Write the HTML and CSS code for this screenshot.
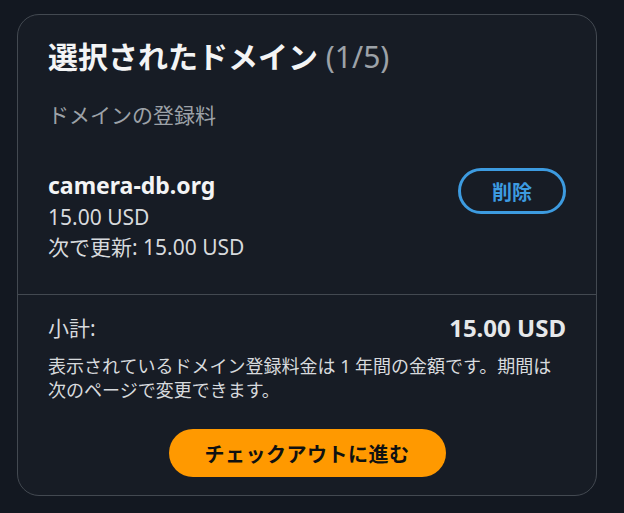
FILE: index.html
```html
<!DOCTYPE html>
<html lang="ja">
  <head>
    <meta charset="utf-8" />
    <meta name="viewport" content="width=device-width, initial-scale=1.0" />
    <title>選択されたドメイン</title>
    <link rel="stylesheet" href="styles.css">
  </head>
  <body>
    <div class="cart">
      <div class="cart-top">
        <h1 class="cart-title">選択されたドメイン <span class="count">(1/5)</span></h1>
        <p class="section-label">ドメインの登録料</p>
        <div class="item">
          <div class="item-info">
            <div class="domain">camera-db.org</div>
            <div class="price">15.00 USD</div>
            <div class="price">次で更新: 15.00 USD</div>
          </div>
          <button class="remove-button">削除</button>
        </div>
      </div>
      <div class="cart-bottom">
        <div class="subtotal">
          <span>小計:</span>
          <span class="subtotal-value">15.00 USD</span>
        </div>
        <p class="note">表示されているドメイン登録料金は 1 年間の金額です。期間は次のページで変更できます。</p>
        <div class="checkout">
          <button class="checkout-button">チェックアウトに進む</button>
        </div>
      </div>
    </div>
  </body>
</html>
```

FILE: styles.css
```css
* {
  padding: 0;
  margin: 0;
  box-sizing: border-box;
  font-family: "Noto Sans", "Noto Sans CJK JP", sans-serif;
}
body {
  height: 100vh;
  background-color: #131821;
  padding: 14px 0 0 17px;
}
.cart {
  width: 580px;
  background-color: #171c25;
  border: 1px solid #434951;
  border-radius: 22px;
  color: #d7dadd;
}
.cart-top {
  padding: 22px 30px 32px 30px;
}
.cart-title {
  font-size: 30px;
  line-height: 40px;
  font-weight: 700;
  color: #f3f4f5;
}
.cart-title .count {
  font-weight: 400;
  color: #9da2a8;
}
.section-label {
  margin-top: 25px;
  font-size: 21px;
  line-height: 26px;
  color: #9da2a8;
}
.item {
  display: flex;
  justify-content: space-between;
  align-items: flex-start;
  margin-top: 40px;
}
.domain {
  font-size: 23px;
  line-height: 34px;
  font-weight: 700;
  color: #f3f4f5;
}
.price {
  font-size: 21px;
  line-height: 30px;
}
.remove-button {
  width: 108px;
  height: 46px;
  border: 3px solid #3d9be0;
  border-radius: 23px;
  background: none;
  color: #3d9be0;
  font-size: 20px;
  font-weight: 700;
  cursor: pointer;
}
.cart-bottom {
  border-top: 1px solid #434951;
  padding: 18px 30px 18px 30px;
}
.subtotal {
  display: flex;
  justify-content: space-between;
  align-items: center;
  font-size: 21px;
  line-height: 30px;
}
.subtotal-value {
  font-size: 24px;
  font-weight: 700;
  color: #e6e8ea;
}
.note {
  margin-top: 11px;
  font-size: 18px;
  line-height: 24px;
}
.checkout {
  display: flex;
  justify-content: center;
  margin-top: 27px;
}
.checkout-button {
  width: 277px;
  height: 48px;
  border: none;
  border-radius: 24px;
  background-color: #ff9900;
  color: #0f1111;
  font-size: 20px;
  font-weight: 700;
  letter-spacing: 0.5px;
  cursor: pointer;
}
```
